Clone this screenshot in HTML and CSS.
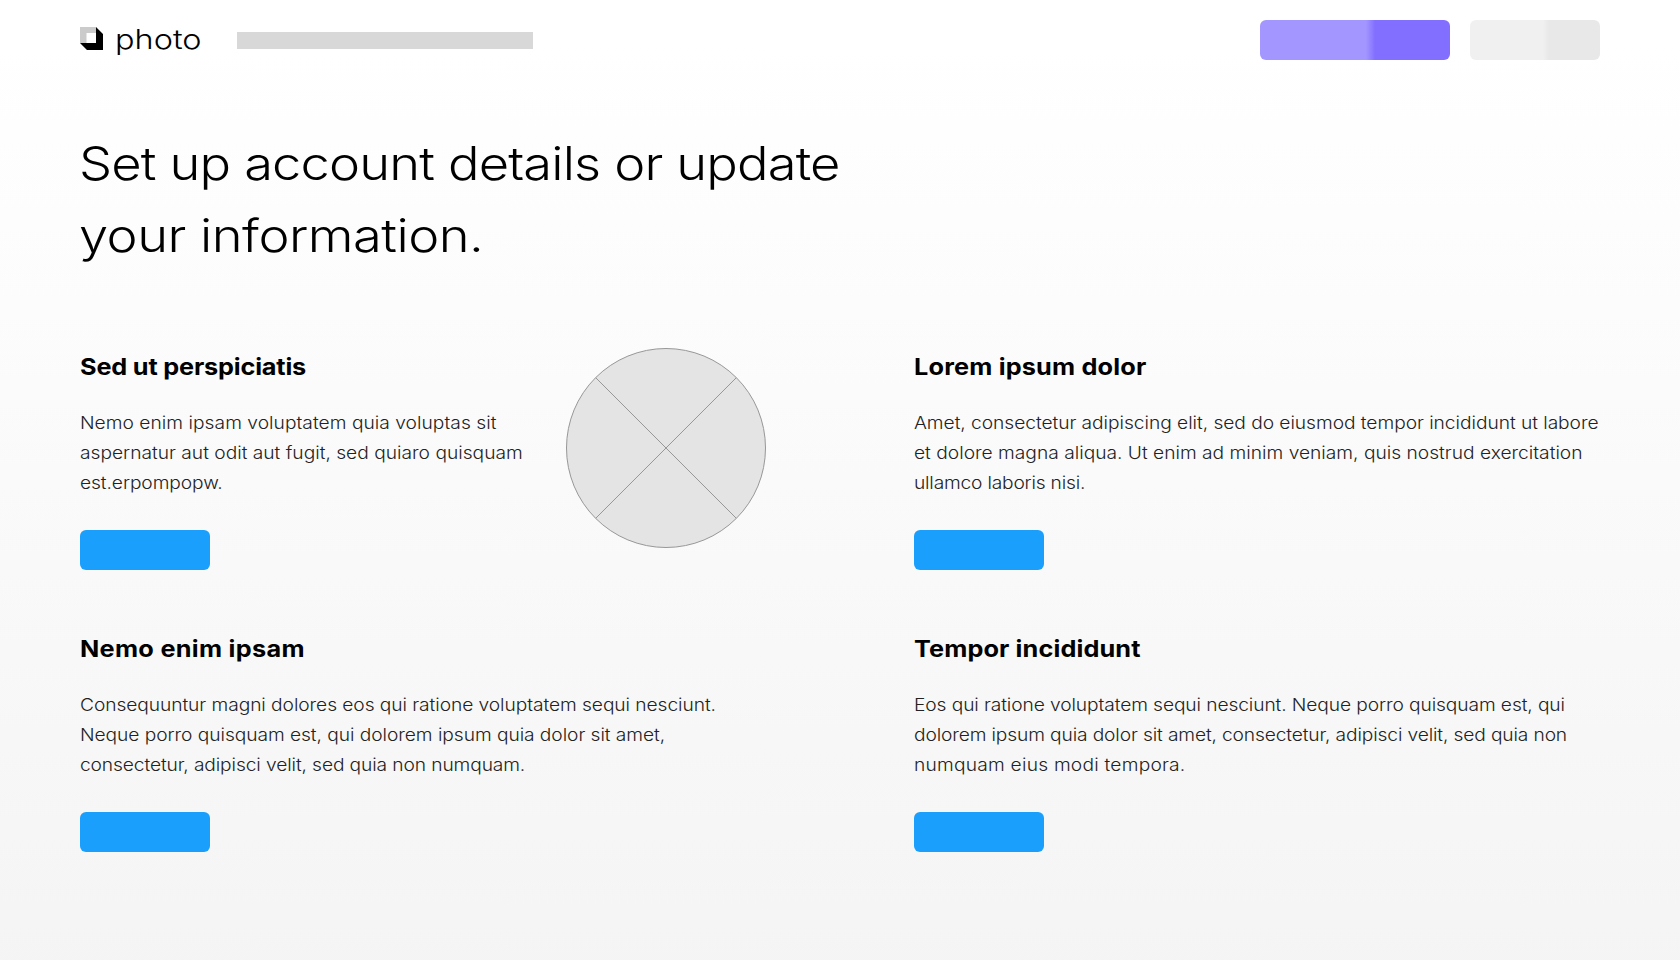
FILE: index.html
```
<!DOCTYPE html>
<html lang="en">
<head>
<meta charset="utf-8">
<title>photo – Account details</title>
<link rel="stylesheet" href="styles.css">
</head>
<body>
<header class="topbar">
  <a class="brand">
    <svg class="brand-mark" width="23" height="23" viewBox="0 0 23 23">
      <path fill="#cbcbcb" d="M0 0h16v6H7v10H0z"/>
      <path fill="#fff" d="M6.5 6H16v10H6.5z"/>
      <path fill="#000" d="M16 0l7 7v16H7l-7-7h16z"/>
    </svg>
    <span class="brand-name">photo</span>
  </a>
  <div class="nav-bar"></div>
  <div class="actions">
    <div class="action action-primary"></div>
    <div class="action action-secondary"></div>
  </div>
</header>
<main>
  <h1 class="title">
    <span class="line">Set up account details or update</span>
    <span class="line track-title">your information.</span>
  </h1>
  <div class="sections">
    <section class="with-image">
      <div class="copy">
        <h2><span class="line track-a">Sed ut perspiciatis</span></h2>
        <p>
          <span class="line track-p1">Nemo enim ipsam voluptatem quia voluptas sit</span>
          <span class="line track-p2">aspernatur aut odit aut fugit, sed quiaro quisquam</span>
          <span class="line track-p3">est.erpompopw.</span>
        </p>
        <div class="button"></div>
      </div>
      <svg class="placeholder" width="200" height="200" viewBox="0 0 200 200" fill="none" stroke="#979797">
        <circle cx="100" cy="100" r="99.5" fill="#e4e4e4"/>
        <path d="M29.6 29.6l140.8 140.8M170.4 29.6L29.6 170.4"/>
      </svg>
    </section>
    <section>
      <h2><span class="line track-b">Lorem ipsum dolor</span></h2>
      <p>
        <span class="line track-p4">Amet, consectetur adipiscing elit, sed do eiusmod tempor incididunt ut labore</span>
        <span class="line">et dolore magna aliqua. Ut enim ad minim veniam, quis nostrud exercitation</span>
        <span class="line track-p6">ullamco laboris nisi.</span>
      </p>
      <div class="button"></div>
    </section>
    <section>
      <h2><span class="line track-c">Nemo enim ipsam</span></h2>
      <p>
        <span class="line track-p7">Consequuntur magni dolores eos qui ratione voluptatem sequi nesciunt.</span>
        <span class="line track-p8">Neque porro quisquam est, qui dolorem ipsum quia dolor sit amet,</span>
        <span class="line track-p9">consectetur, adipisci velit, sed quia non numquam.</span>
      </p>
      <div class="button"></div>
    </section>
    <section>
      <h2><span class="line track-d">Tempor incididunt</span></h2>
      <p>
        <span class="line track-p10">Eos qui ratione voluptatem sequi nesciunt. Neque porro quisquam est, qui</span>
        <span class="line track-p11">dolorem ipsum quia dolor sit amet, consectetur, adipisci velit, sed quia non</span>
        <span class="line track-p12">numquam eius modi tempora.</span>
      </p>
      <div class="button"></div>
    </section>
  </div>
</main>
</body>
</html>
```
FILE: styles.css
```
* { box-sizing: border-box; margin: 0; padding: 0; }

body {
  min-height: 960px;
  padding: 0 80px;
  background: linear-gradient(to bottom, #fff 43px, #f4f4f4 1003px);
  font-family: Inter, "Liberation Sans", sans-serif;
  color: #000;
}

.topbar { display: flex; align-items: center; height: 80px; }
.brand { display: flex; width: 157px; height: 40px; gap: 12px; }
.brand-mark { margin-top: 7px; flex: none; }
.brand-name {
  font-size: 27.5px;
  font-weight: 350;
  line-height: 39px;
  transform: scaleX(1.18);
  transform-origin: left;
}
.nav-bar { width: 296px; height: 17px; margin-top: 1px; background: #d8d8d8; }
.actions { display: flex; gap: 20px; margin-left: auto; }
.action { height: 40px; border-radius: 6px; }
.action-primary {
  width: 190px;
  background: linear-gradient(to right, #a396ff 106px, #836fff 115px);
}
.action-secondary {
  width: 130px;
  background: linear-gradient(to right, #f0f0f0 73px, #e8e8e8 79px);
}

/* Widened letterforms, line by line */
.line { display: block; width: max-content; white-space: nowrap; transform-origin: left; }

.title { padding-top: 47px; font-size: 46px; font-weight: 350; line-height: 72px; letter-spacing: -0.75px; }
.title .line { margin-left: -1px; transform: scaleX(1.14); }

.sections {
  display: grid;
  grid-template-columns: 686px 686px;
  column-gap: 148px;
  row-gap: 64px;
  margin-top: 81px;
}
.with-image { display: flex; justify-content: space-between; }
.copy { width: 446px; }
.placeholder { flex: none; margin: -4px 0 0; }

h2 { font-size: 23px; font-weight: 700; line-height: 30px; }
h2 .line { transform: scaleX(1.1); }
p { margin-top: 26px; font-size: 17.3px; font-weight: 320; line-height: 30px; color: #222; }
p .line { transform: scaleX(1.11); }
.button { width: 130px; height: 40px; margin-top: 32px; border-radius: 6px; background: #1b9ffc; }

.title .track-title { letter-spacing: -0.46px; }
.track-a { letter-spacing: -0.17px; }
.track-b { letter-spacing: 0.15px; }
.track-c { letter-spacing: 0.26px; }
.track-d { letter-spacing: 0.1px; }
.track-p1 { letter-spacing: 0.03px; }
.track-p2 { letter-spacing: 0; }
.track-p3 { letter-spacing: -0.07px; }
.track-p4 { letter-spacing: -0.04px; }
.track-p6 { letter-spacing: -0.18px; }
.track-p7 { letter-spacing: -0.06px; }
.track-p8 { letter-spacing: -0.05px; }
.track-p9 { letter-spacing: -0.1px; }
.track-p10 { letter-spacing: -0.09px; }
.track-p11 { letter-spacing: -0.12px; }
.track-p12 { letter-spacing: 0.2px; }
```
